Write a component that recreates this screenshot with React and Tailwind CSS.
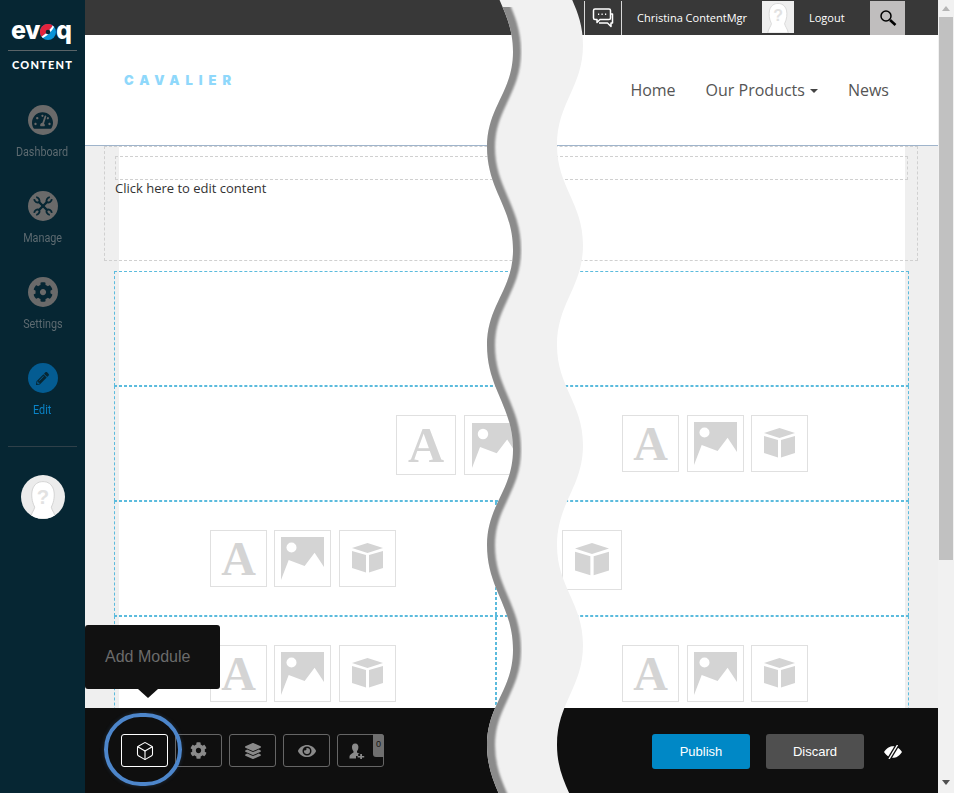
import React from 'react';
import { FaCog, FaLayerGroup, FaEye, FaPencilAlt, FaTachometerAlt } from 'react-icons/fa';
import { Box } from 'lucide-react';

const wavePts = (a, b, ys) => {
  let d = '';
  ys.forEach((y, i) => {
    const x = i % 2 === 0 ? a : b;
    if (i === 0) d += `M${x} ${y}`;
    else {
      const px = i % 2 === 1 ? a : b;
      const py = ys[i - 1];
      const k = (y - py) * 0.42;
      d += ` C${px} ${py + k} ${x} ${y - k} ${x} ${y}`;
    }
  });
  return d;
};
const leftYs = [-50, 52, 147, 250, 345, 450, 545, 650, 745, 848];
const rightYs = [-55, 45, 145, 245, 345, 445, 545, 645, 745, 845];
const leftD = wavePts(487, 513, leftYs);
const rightPts = [];
for (let i = 9; i >= 0; i--) rightPts.push([i % 2 === 0 ? 557 : 583, rightYs[i]]);
let rightD = '';
rightPts.forEach(([x, y], i) => {
  if (i === 0) rightD += `L${x} ${y}`;
  else {
    const [px, py] = rightPts[i - 1];
    const k = (y - py) * 0.42;
    rightD += ` C${px} ${py + k} ${x} ${y - k} ${x} ${y}`;
  }
});
const bandD = `${leftD} ${rightD} Z`;

function Wave() {
  return (
    <svg className="absolute inset-0 pointer-events-none" width="954" height="793" viewBox="0 0 954 793">
      <defs>
        <clipPath id="band"><path d={bandD} /></clipPath>
        <clipPath id="below"><rect x="0" y="7" width="954" height="800" /></clipPath>
        <filter id="soft" x="-20%" y="-5%" width="140%" height="110%"><feGaussianBlur stdDeviation="0.9" /></filter>
      </defs>
      <path d={bandD} fill="#f1f1f1" />
      <g clipPath="url(#band)">
        <g clipPath="url(#below)">
          <path d={leftD} transform="translate(3 0)" fill="none" stroke="#8b8b8b" strokeWidth="10" filter="url(#soft)" />
        </g>
      </g>
    </svg>
  );
}

function Head({ className }) {
  return (
    <svg className={className} viewBox="0 0 32 32">
      <path d="M5 32 C6 27 8.5 25 9 22 C6.5 17 6 12 7 7.5 C8.5 2.5 12 0.5 16 0.5 C20 0.5 23.5 2.5 25 7.5 C26 12 25.5 17 23 22 C23.5 25 26 27 27 32 Z" fill="#ffffff" stroke="#d2d2d2" strokeWidth="0.8" />
      <text x="16" y="19" textAnchor="middle" fontFamily="Liberation Sans, sans-serif" fontWeight="700" fontSize="17" fill="#e2e2e2">?</text>
    </svg>
  );
}

function ImgIcon({ size = 43 }) {
  return (
    <svg width={size} height={size} viewBox="0 0 43 43">
      <path d="M0 0 H43 V30 L33.6 15.7 L23.6 29 L7.7 23 L0 43 Z" fill="#d4d4d4" />
      <circle cx="10.5" cy="10.5" r="5" fill="#fff" />
    </svg>
  );
}

function CubeIcon({ size = 31 }) {
  return (
    <svg width={size} height={size} viewBox="0 0 31 31">
      <path d="M15.5 0 L31 5 L15.5 10 L0 5 Z" fill="#d4d4d4" />
      <path d="M0 8 L14 12 V29.5 L0 25 Z" fill="#d4d4d4" />
      <path d="M17 12 L31 8 V25 L17 29.5 Z" fill="#d4d4d4" />
    </svg>
  );
}

function Tile({ big, kind }) {
  return (
    <div className={`${big ? 'w-[60px] h-[60px]' : 'w-[57px] h-[57px]'} border border-[#e0e0e0] flex items-center justify-center shrink-0 overflow-hidden`}>
      {kind === 'a' && (
        <span className={`${big ? 'text-[50px]' : 'text-[48px]'} font-bold leading-none text-[#d4d4d4] font-['Liberation_Serif',serif]`}>A</span>
      )}
      {kind === 'i' && <ImgIcon size={big ? 45 : 43} />}
      {kind === 'c' && <CubeIcon size={big ? 34 : 31} />}
    </div>
  );
}

function Tiles({ big, kinds, className = '' }) {
  return (
    <div className={`flex ${className}`}>
      {kinds.map((k) => <Tile key={k} big={big} kind={k} />)}
    </div>
  );
}

function NavItem({ icon, label, active }) {
  return (
    <div className="flex flex-col items-center h-[86px]">
      <div className={`w-[30px] h-[30px] rounded-full flex items-center justify-center ${active ? 'bg-[#045c92] text-[#062633]' : 'bg-[#6a6a6a] text-[#062633]'}`}>
        {icon}
      </div>
      <div className={`mt-[8px] text-[12px] leading-[18px] font-['Roboto',sans-serif] scale-x-90 ${active ? 'text-[#0a84c8]' : 'text-[#5d6a70]'}`}>{label}</div>
    </div>
  );
}

function Wrenches() {
  return (
    <svg width="22" height="22" viewBox="0 0 22 22" fill="none" stroke="#062633" strokeLinecap="butt">
      <path d="M6.5 6.5 L15.5 15.5" strokeWidth="2.4" />
      <path d="M15.5 6.5 L6.5 15.5" strokeWidth="2.4" />
      <path d="M2.2 4.2 A3.6 3.6 0 0 0 7.2 7.2 A3.6 3.6 0 0 0 4.2 2.2" strokeWidth="1.8" />
      <path d="M19.8 17.8 A3.6 3.6 0 0 0 14.8 14.8 A3.6 3.6 0 0 0 17.8 19.8" strokeWidth="1.8" />
      <path d="M19.8 4.2 A3.6 3.6 0 0 1 14.8 7.2 A3.6 3.6 0 0 1 17.8 2.2" strokeWidth="1.8" />
      <path d="M2.2 17.8 A3.6 3.6 0 0 1 7.2 14.8 A3.6 3.6 0 0 1 4.2 19.8" strokeWidth="1.8" />
    </svg>
  );
}

function Sidebar() {
  return (
    <aside className="w-[85px] shrink-0 bg-[#062633] flex flex-col items-stretch">
      <div className="h-[50px] pt-[17px] pl-[11px] flex items-start">
        <span className="text-white font-extrabold text-[25px] leading-[27px] tracking-[-0.5px] font-['Inter',sans-serif]">ev</span>
        <svg width="16" height="16" viewBox="0 0 16 16" className="mt-[6.5px] shrink-0">
          <circle cx="8" cy="8" r="8" fill="#0a94d8" />
          <path d="M1.5 12.7 A8 8 0 0 1 12.7 1.5 C11 5 6 10 1.5 12.7 Z" fill="#e2233d" />
          <path d="M1.5 12.7 C6 10 11 5 12.7 1.5 L14 3 C12 7 7 12 3 14 Z" fill="#ffffff" />
          <circle cx="8" cy="8" r="2.3" fill="#062633" />
        </svg>
        <span className="text-white font-extrabold text-[25px] leading-[27px] font-['Inter',sans-serif]">q</span>
      </div>
      <div className="mx-[8px] h-px bg-[#5a6468]" />
      <div className="mt-[6px] text-center text-white font-black text-[11px] leading-[16px] tracking-[1.2px] font-['Lato',sans-serif]">CONTENT</div>
      <div className="mt-[32px]">
        <NavItem icon={<FaTachometerAlt size={21} />} label="Dashboard" />
        <NavItem icon={<Wrenches />} label="Manage" />
        <NavItem icon={<FaCog size={20} />} label="Settings" />
        <NavItem active icon={<FaPencilAlt size={13} />} label="Edit" />
      </div>
      <div className="mx-[8px] mt-[-3px] h-px bg-[#2f4049]" />
      <div className="mt-[28px] self-center w-[44px] h-[44px] rounded-full bg-[#ececec] overflow-hidden flex items-end justify-center">
        <Head className="w-[38px] h-[38px]" />
      </div>
    </aside>
  );
}

function TopBar() {
  return (
    <div className="h-[35px] bg-[#383838] flex items-stretch pt-px text-white text-[11px] font-['Open_Sans',sans-serif]">
      <div className="ml-[499px] w-px bg-[#d8d8d8]" />
      <div className="w-[36px] flex items-center justify-center">
        <svg width="22" height="20" viewBox="0 0 22 20" fill="none" stroke="#fff" strokeWidth="1.5" strokeLinejoin="round">
          <path d="M5 1 H17 A1.5 1.5 0 0 1 18.5 2.5 V10 A1.5 1.5 0 0 1 17 11.5 H8 L5 14.5 V11.5 H3 A1.5 1.5 0 0 1 1.5 10 V2.5 A1.5 1.5 0 0 1 3 1 Z" />
          <path d="M18.5 6 H20.5 V15 H19 V18.5 L15.5 15 H7" />
          <path d="M6 6.3 H7.2 M9.5 6.3 H10.7 M13 6.3 H14.2" strokeWidth="1.6" />
        </svg>
      </div>
      <div className="w-px bg-[#d8d8d8]" />
      <div className="ml-[15px] w-[125px] flex items-center leading-none pb-[2px]">Christina ContentMgr</div>
      <div className="w-[32px] h-[32px] bg-[#efefef] flex items-end justify-center overflow-hidden">
        <Head className="w-[30px] h-[30px]" />
      </div>
      <div className="ml-[15px] w-[61px] flex items-center leading-none pb-[2px]">Logout</div>
      <div className="w-[35px] bg-[#c0bebe] flex items-center justify-center">
        <svg width="18" height="18" viewBox="0 0 18 18" fill="none" stroke="#000">
          <circle cx="7" cy="7" r="5" strokeWidth="1.5" />
          <path d="M11 11 L16.5 16" strokeWidth="2.6" />
        </svg>
      </div>
    </div>
  );
}

function Header() {
  return (
    <header className="h-[111px] bg-white border-b border-[#9fb4cb] flex items-center justify-between pl-[39px] pr-[49px] font-['Open_Sans',sans-serif] text-[#555]">
      <div className="mb-[19px] text-[#8fd8fb] font-black text-[13px] leading-none tracking-[5.9px] font-['Inter',sans-serif]">CAVALIER</div>
      <nav className="flex items-center gap-[30px] text-[16px] font-normal leading-none mb-[1px]">
        <span className="-ml-px">Home</span>
        <span className="flex items-center gap-[5px]">Our Products<span className="w-0 h-0 border-t-4 border-x-4 border-x-transparent border-t-[#444] mt-[2px]" /></span>
        <span>News</span>
      </nav>
    </header>
  );
}

function Row({ children, className = '' }) {
  return <div className={`-ml-[5px] -mr-[4px] h-[115px] border border-dashed border-[#5bbbdd] ${className}`}>{children}</div>;
}

function Content() {
  return (
    <div className="flex-1 min-h-0 overflow-hidden bg-[#efefef] pl-[34px] pr-[33px]">
      <div className="h-full bg-white">
        <div className="-ml-[15px] -mr-[13px] h-[115px] border border-dashed border-[#d0d0d0] pt-[9px] pl-[10px] pr-[9px]">
          <div className="h-[24px] border border-dashed border-[#d0d0d0]" />
          <div className="mt-[-2px] h-[18px] pt-[2px] text-[13px] leading-[16px] text-[#333] font-['Open_Sans',sans-serif] whitespace-nowrap">Click here to edit content</div>
        </div>
        <div className="mt-[10px]" />
        <Row />
        <Row className="flex items-start pt-[28px]">
          <Tiles big kinds={['a', 'i']} className="ml-[281px] gap-[8px]" />
          <Tiles kinds={['a', 'i', 'c']} className="ml-[98px] gap-x-[7.5px]" />
        </Row>
        <Row className="flex">
          <div className="w-[381px] border-r border-dashed border-[#5bbbdd] pt-[28px] pl-[95px]">
            <Tiles kinds={['a', 'i', 'c']} className="gap-x-[7px] [&>*:last-child]:ml-px" />
          </div>
          <div className="flex-1 border-l border-dashed border-[#5bbbdd] pt-[28px] pl-[65px]">
            <Tile big kind="c" />
          </div>
        </Row>
        <Row className="flex">
          <div className="w-[381px] border-r border-dashed border-[#5bbbdd] pt-[28px] pl-[95px]">
            <Tiles kinds={['a', 'i', 'c']} className="gap-x-[7px] [&>*:last-child]:ml-px" />
          </div>
          <div className="flex-1 border-l border-dashed border-[#5bbbdd] pt-[28px] pl-[125px]">
            <Tiles kinds={['a', 'i', 'c']} className="gap-x-[7.5px]" />
          </div>
        </Row>
      </div>
    </div>
  );
}

function ToolBtn({ children, active }) {
  return (
    <div className={`relative w-[47px] h-[33px] rounded-[3px] border flex items-center justify-center ${active ? 'border-white text-white' : 'border-[#666] text-[#8a8a8a]'}`}>
      {children}
    </div>
  );
}

function BottomBar() {
  return (
    <div className="relative h-[85px] shrink-0 bg-[#0f0f0f] flex items-start pt-[26px] pl-[36px] pr-[36px]">
      <div className="flex gap-[7px]">
        <ToolBtn active><Box size={20} strokeWidth={1.3} /></ToolBtn>
        <ToolBtn><FaCog size={17} /></ToolBtn>
        <ToolBtn><FaLayerGroup size={16} /></ToolBtn>
        <ToolBtn><FaEye size={18} /></ToolBtn>
        <ToolBtn>
          <svg width="16" height="16" viewBox="0 0 16 16" className="mr-[8px] shrink-0" fill="currentColor">
            <path d="M6.2 0.5 C8.6 0.5 9.6 2.4 9.4 4.6 C9.3 6.2 8.6 7.5 8 8.2 V9.4 C9 9.9 9.7 10.2 10.3 10.6 V11 H9.2 V13 H7 V15.5 H0.5 V13.6 C0.5 11.6 3 10.4 4.5 9.4 V8.2 C3.8 7.5 3.1 6.2 3 4.6 C2.8 2.4 3.8 0.5 6.2 0.5 Z" />
            <path d="M11.2 11 H13 V13 H15.2 V14.6 H13 V16 H11.2 V14.6 H8.6 V13 H11.2 Z" />
          </svg>
          <span className="absolute -top-px -right-px w-[11px] h-[23px] rounded-tr-[3px] rounded-bl-[3px] bg-[#6f6f6f] text-[#151515] text-[9px] leading-[20px] text-center font-['Liberation_Sans',sans-serif]">0</span>
        </ToolBtn>
      </div>
      <div className="ml-auto flex items-start font-['Liberation_Sans',sans-serif] text-[13px] text-white">
        <div className="w-[98px] h-[35px] rounded-[3px] bg-[#0088c6] flex items-center justify-center">Publish</div>
        <div className="ml-[16px] w-[98px] h-[35px] rounded-[3px] bg-[#4f4f4f] flex items-center justify-center">Discard</div>
        <div className="ml-[20px] w-[18px] h-[35px] flex items-center justify-center">
          <svg width="18" height="14" viewBox="0 0 18 14">
            <path d="M0 7 C3 2.5 6 1.2 9 1.2 C12 1.2 15 2.5 18 7 C15 11.5 12 12.8 9 12.8 C6 12.8 3 11.5 0 7 Z" fill="#fff" />
            <path d="M13.5 0 L5 14" stroke="#0f0f0f" strokeWidth="4" />
            <path d="M13.5 0 L5 14" stroke="#fff" strokeWidth="1.4" />
          </svg>
        </div>
      </div>
      <div className="absolute left-[19px] top-[5px] w-[78px] h-[73px] rounded-full border-[4px] border-[#4d86cb] shadow-[0_0_4px_rgba(77,134,203,0.25)]" />
      <div className="absolute left-0 bottom-[104px] w-[135px] h-[64px] rounded-[3px] bg-[#111] flex items-center pl-[20px] text-[16px] text-[#6b6b6b] font-['Liberation_Sans',sans-serif]">
        Add Module
        <span className="absolute left-[53px] top-full w-0 h-0 border-t-[9px] border-x-[10px] border-x-transparent border-t-[#111]" />
      </div>
    </div>
  );
}

function Scrollbar() {
  return (
    <div className="w-[16px] shrink-0 bg-[#f1f1f1] flex flex-col items-center">
      <div className="h-[17px] flex items-center justify-center">
        <span className="w-0 h-0 border-b-[5px] border-x-[4px] border-x-transparent border-b-[#b5b5b5]" />
      </div>
      <div className="w-[14px] h-[543px] bg-[#c1c1c1]" />
      <div className="flex-1 flex items-end">
        <div className="h-[21px] flex items-center justify-center">
          <span className="w-0 h-0 border-t-[5px] border-x-[4px] border-x-transparent border-t-[#505050]" />
        </div>
      </div>
    </div>
  );
}

export default function App() {
  return (
    <div className="relative w-[954px] h-[793px] overflow-hidden flex bg-white">
      <Sidebar />
      <main className="flex-1 min-w-0 flex flex-col">
        <TopBar />
        <Header />
        <Content />
        <BottomBar />
      </main>
      <Scrollbar />
      <Wave />
    </div>
  );
}
